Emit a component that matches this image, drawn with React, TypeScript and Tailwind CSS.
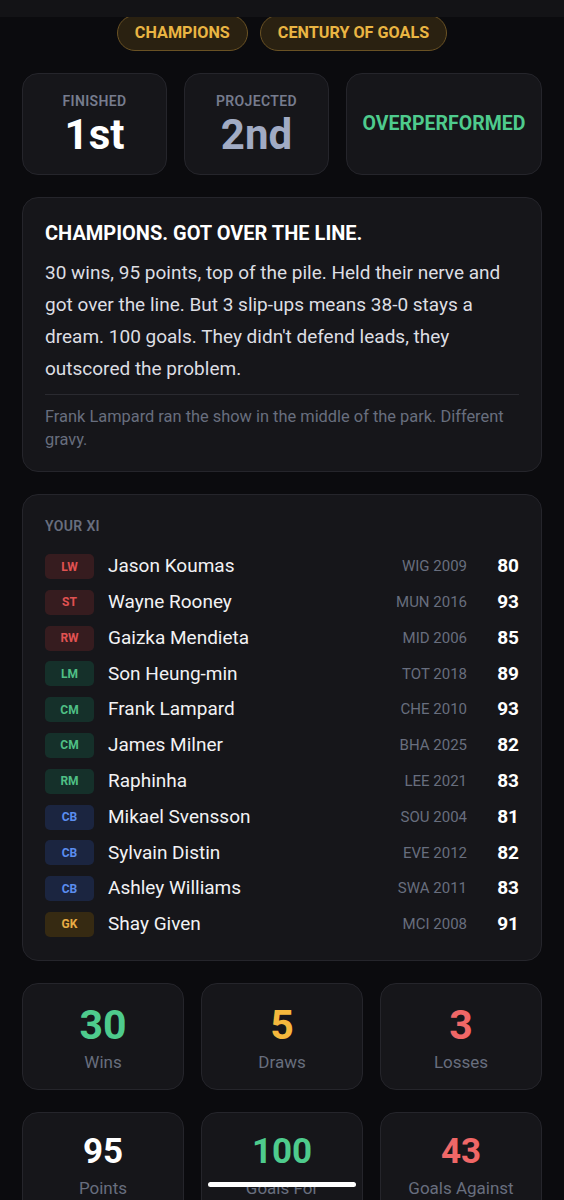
import React from "react";

type Pos = "LW" | "ST" | "RW" | "LM" | "CM" | "RM" | "CB" | "GK";

const POS_STYLES: Record<Pos, string> = {
  LW: "bg-[#361c1f] text-[#e05252]",
  ST: "bg-[#361c1f] text-[#e05252]",
  RW: "bg-[#361c1f] text-[#e05252]",
  LM: "bg-[#15302a] text-[#4fbf85]",
  CM: "bg-[#15302a] text-[#4fbf85]",
  RM: "bg-[#15302a] text-[#4fbf85]",
  CB: "bg-[#1b2540] text-[#5b8def]",
  GK: "bg-[#362a12] text-[#e8ac45]",
};

const XI: { pos: Pos; name: string; club: string; rating: number }[] = [
  { pos: "LW", name: "Jason Koumas", club: "WIG 2009", rating: 80 },
  { pos: "ST", name: "Wayne Rooney", club: "MUN 2016", rating: 93 },
  { pos: "RW", name: "Gaizka Mendieta", club: "MID 2006", rating: 85 },
  { pos: "LM", name: "Son Heung-min", club: "TOT 2018", rating: 89 },
  { pos: "CM", name: "Frank Lampard", club: "CHE 2010", rating: 93 },
  { pos: "CM", name: "James Milner", club: "BHA 2025", rating: 82 },
  { pos: "RM", name: "Raphinha", club: "LEE 2021", rating: 83 },
  { pos: "CB", name: "Mikael Svensson", club: "SOU 2004", rating: 81 },
  { pos: "CB", name: "Sylvain Distin", club: "EVE 2012", rating: 82 },
  { pos: "CB", name: "Ashley Williams", club: "SWA 2011", rating: 83 },
  { pos: "GK", name: "Shay Given", club: "MCI 2008", rating: 91 },
];

const RECORD = [
  { value: "30", label: "Wins", color: "text-[#4ecb8d]" },
  { value: "5", label: "Draws", color: "text-[#f5b83d]" },
  { value: "3", label: "Losses", color: "text-[#ef6767]" },
];

const GOALS = [
  { value: "95", label: "Points", color: "text-white" },
  { value: "100", label: "Goals For", color: "text-[#4ecb8d]" },
  { value: "43", label: "Goals Against", color: "text-[#ef6767]" },
];

const card = "rounded-[16px] border border-[#25252b] bg-[#16161a]";

export default function App() {
  return (
    <div
      className="min-h-screen bg-[#0b0b0e] text-white"
      style={{ fontFamily: "Roboto, 'Liberation Sans', sans-serif" }}
    >
      <div className="fixed top-0 left-0 right-0 h-[17px] bg-[#131316] z-10" />

      <div className="px-[22px] pt-[15px] pb-10 flex flex-col gap-[22px]">
        {/* achievements */}
        <div className="flex justify-center gap-[12px]">
          {["CHAMPIONS", "CENTURY OF GOALS"].map((b) => (
            <span
              key={b}
              className="h-[36px] px-[17px] flex items-center rounded-full border border-[#6a5224] bg-[#2a2111] text-[16.2px] font-bold text-[#eab543]"
            >
              {b}
            </span>
          ))}
        </div>

        {/* finish vs projection */}
        <div className="grid grid-cols-[145px_145px_1fr] gap-[17px]">
          <div className={`${card} h-[102px] flex flex-col items-center justify-center`}>
            <span className="text-[14px] font-semibold tracking-wide text-[#767c8e]">FINISHED</span>
            <span className="text-[42px] font-bold leading-[46px] text-white">1st</span>
          </div>
          <div className={`${card} h-[102px] flex flex-col items-center justify-center`}>
            <span className="text-[14px] font-semibold tracking-wide text-[#767c8e]">PROJECTED</span>
            <span className="text-[42px] font-bold leading-[46px] text-[#a1abc4]">2nd</span>
          </div>
          <div className={`${card} h-[102px] flex items-center justify-center`}>
            <span className="text-[19.5px] font-bold text-[#4ecb8d]">OVERPERFORMED</span>
          </div>
        </div>

        {/* verdict */}
        <div className={`${card} px-[22px] pt-[22px] pb-[20px]`}>
          <h2 className="text-[20px] font-bold leading-[26px] text-white">CHAMPIONS. GOT OVER THE LINE.</h2>
          <p className="mt-[11px] text-[19px] leading-[32px] text-[#dddee3]">
            30 wins, 95 points, top of the pile. Held their nerve and got over the line. But 3
            slip-ups means 38-0 stays a dream. 100 goals. They didn't defend leads, they outscored
            the problem.
          </p>
          <p className="mt-[9px] border-t border-[#2a2a30] pt-[10px] text-[16.4px] leading-[23px] text-[#686e7e]">
            Frank Lampard ran the show in the middle of the park. Different gravy.
          </p>
        </div>

        {/* starting eleven */}
        <div className={`${card} px-[22px] pt-[22px] pb-[23px]`}>
          <div className="text-[14px] font-semibold tracking-wide leading-[18px] text-[#686e7e]">YOUR XI</div>
          <div className="mt-[19px] flex flex-col gap-[10.8px]">
            {XI.map((p) => (
              <div key={p.name} className="h-[25px] flex items-center">
                <span
                  className={`w-[49px] h-[25px] rounded-[5px] flex items-center justify-center text-[12px] font-bold ${POS_STYLES[p.pos]}`}
                >
                  {p.pos}
                </span>
                <span className="ml-[14px] flex-1 text-[19px] text-[#f2f2f4]">{p.name}</span>
                <span className="text-[15px] text-[#686e7e]">{p.club}</span>
                <span className="w-[52px] text-right text-[19px] font-bold text-white">{p.rating}</span>
              </div>
            ))}
          </div>
        </div>

        {/* season record */}
        <div className="grid grid-cols-3 gap-[17px]">
          {RECORD.map((s) => (
            <div key={s.label} className={`${card} h-[107px] pt-[3px] flex flex-col items-center justify-center`}>
              <span className={`text-[41px] font-bold leading-[44px] ${s.color}`}>{s.value}</span>
              <span className="mt-[4px] text-[17px] leading-[22px] text-[#686e7e]">{s.label}</span>
            </div>
          ))}
        </div>

        <div className="grid grid-cols-3 gap-[17px]">
          {GOALS.map((s) => (
            <div key={s.label} className={`${card} h-[107px] flex flex-col items-center justify-center`}>
              <span className={`text-[35px] font-bold leading-[40px] ${s.color}`}>{s.value}</span>
              <span className="mt-[5px] text-[17px] leading-[22px] text-[#686e7e]">{s.label}</span>
            </div>
          ))}
        </div>
      </div>

      <div className="fixed bottom-[13px] left-1/2 -translate-x-1/2 w-[148px] h-[5px] rounded-full bg-white z-10" />
    </div>
  );
}
